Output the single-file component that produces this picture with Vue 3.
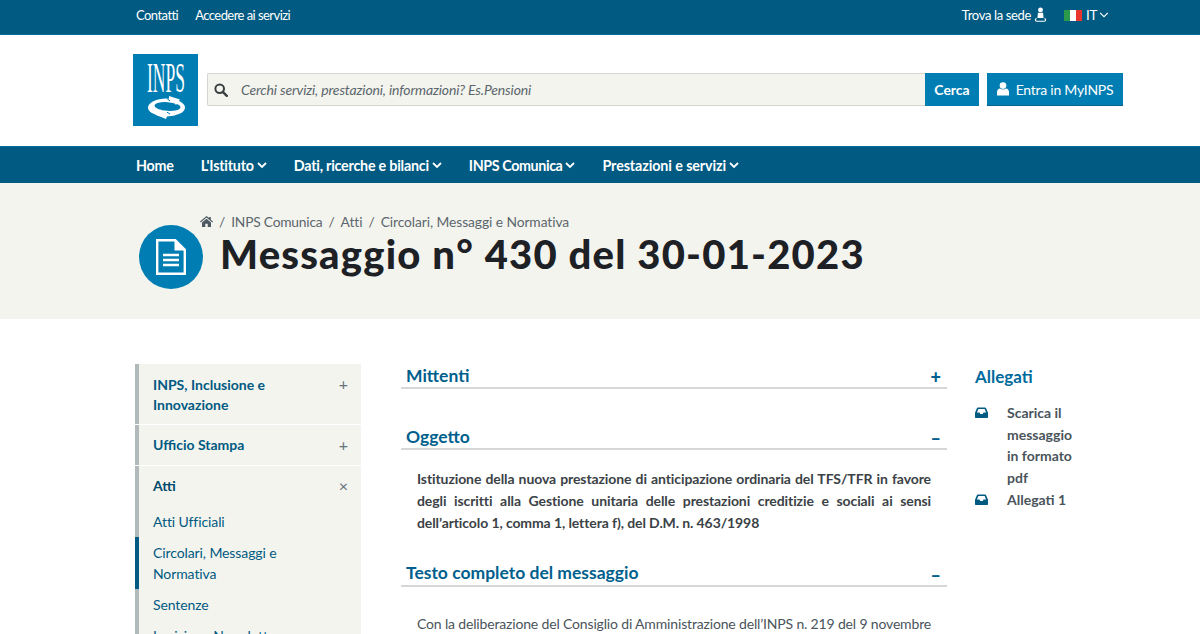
<script setup>
const menu = [
  { t: 'Home', c: false },
  { t: "L'Istituto", c: true },
  { t: 'Dati, ricerche e bilanci', c: true },
  { t: 'INPS Comunica', c: true },
  { t: 'Prestazioni e servizi', c: true }
]
</script>

<template>
  <div class="page">
    <div class="topbar">
      <div class="top-left"><span>Contatti</span><span>Accedere ai servizi</span></div>
      <div class="top-right">
        <span class="sede">Trova la sede
          <svg width="13" height="16" viewBox="0 0 14 17"><circle cx="7" cy="3" r="2.6" fill="#fff"/><path d="M4.2 6.2h5.6l.5 5.6H3.700z" fill="#fff"/><path d="M2.500 11.500C.5 12.300.2 15.600 3 15.800h8c2.800-.2 2.500-3.500.5-4.300l-.3 1.200c1.100.6 1 1.900-.3 2H3.100c-1.300-.1-1.400-1.400-.3-2z" fill="#fff"/></svg>
        </span>
        <span class="flag"><i class="g"></i><i class="w"></i><i class="r"></i></span>
        <span class="lang">IT
          <svg class="chev" width="10" height="6" viewBox="0 0 11 7"><path d="M1 1l4.500 4.500L10 1" fill="none" stroke="#fff" stroke-width="1.300"/></svg>
        </span>
      </div>
    </div>

    <header class="head">
      <svg class="logo" width="65" height="72" viewBox="0 0 65 72">
        <rect width="65" height="72" fill="#007db3"/>
        <text x="33" y="38" text-anchor="middle" textLength="38" lengthAdjust="spacingAndGlyphs" font-family="Liberation Serif" font-size="43" fill="#fff">INPS</text>
        <ellipse cx="33.500" cy="53.500" rx="18.500" ry="9" fill="#fff"/>
        <ellipse cx="34.500" cy="52.500" rx="13" ry="4.300" fill="#007db3" transform="rotate(4 34.500 52.500)"/>
        <path d="M36 42l11 3.500-4 5.500-2-2.500-7-1 2-2.500z" fill="#fff"/>
        <path d="M33 65l-10-4 4.500-5.500 2 2.500 6.500 1-1.500 2z" fill="#fff"/>
        <path d="M34 44.500l3 2.500M37 60l-3-1.800" stroke="#007db3" stroke-width="1"/>
      </svg>
      <div class="search">
        <svg width="14" height="14" viewBox="0 0 14 14"><circle cx="5.700" cy="5.700" r="4.300" fill="none" stroke="#3a3f42" stroke-width="2"/><path d="M8.800 8.800l4 4" stroke="#3a3f42" stroke-width="2.400" stroke-linecap="round"/></svg>
        <span>Cerchi servizi, prestazioni, informazioni? Es.Pensioni</span>
      </div>
      <div class="cerca">Cerca</div>
      <div class="entra">
        <svg width="12" height="14" viewBox="0 0 12 14"><circle cx="6" cy="3.600" r="3.300" fill="#fff"/><path d="M0 13.500V10c0-2 1.500-3.300 3-3.500 1.800 1.200 4.200 1.200 6 0 1.500.2 3 1.500 3 3.500v3.500z" fill="#fff"/></svg>
        <span>Entra in MyINPS</span>
      </div>
    </header>

    <nav class="nav">
      <span v-for="m in menu" :key="m.t" class="nav-item">{{ m.t }}
        <svg v-if="m.c" width="10" height="7" viewBox="0 0 10 7"><path d="M1 1l4 4 4-4" fill="none" stroke="#fff" stroke-width="1.800"/></svg>
      </span>
    </nav>

    <section class="hero">
      <div class="crumbs">
        <svg width="13" height="11" viewBox="0 0 13 11"><path d="M6.500 0L0 5.600l.7.8L6.500 1.500l5.800 4.900.7-.8-2.200-1.900V1H9.200v1.100zM2 6.600V11h3.300V7.700h2.400V11H11V6.600L6.500 2.800z" fill="#4d5a62"/></svg>
        <span>/</span><span class="tight">INPS Comunica</span><span>/</span><span>Atti</span><span>/</span><span>Circolari, Messaggi e Normativa</span>
      </div>
      <div class="title-row">
        <div class="circle">
          <svg width="30" height="36" viewBox="0 0 30 36"><path d="M1.200 1.200h18l9.600 9.600v24H1.200z" fill="none" stroke="#fff" stroke-width="2.400"/><path d="M18.500 1.500v10h10z" fill="#fff"/><path d="M7 16h16M7 21h16M7 26h16" stroke="#fff" stroke-width="2.400"/></svg>
        </div>
        <h1>Messaggio n° 430 del 30-01-2023</h1>
      </div>
    </section>

    <div class="content">
      <aside class="side">
        <div class="s-item">
          <div class="s-head"><b class="low">INPS, Inclusione e Innovazione</b><span class="sym">+</span></div>
        </div>
        <div class="s-item">
          <div class="s-head"><b>Ufficio Stampa</b><span class="sym">+</span></div>
        </div>
        <div class="s-item open">
          <div class="s-head"><b class="dark">Atti</b><span class="sym">×</span></div>
          <div class="s-sub">Atti Ufficiali</div>
          <div class="s-sub active">Circolari, Messaggi e Normativa</div>
          <div class="s-sub">Sentenze</div>
          <div class="s-sub">Iscrizione Newsletter</div>
        </div>
      </aside>

      <main class="main">
        <div class="acc first"><h2>Mittenti</h2><span class="pm">+</span></div>
        <div class="acc oggetto"><h2>Oggetto</h2><span class="pm">–</span></div>
        <p class="obj">Istituzione della nuova prestazione di anticipazione ordinaria del TFS/TFR in favore degli iscritti alla Gestione unitaria delle prestazioni creditizie e sociali ai sensi dell’articolo 1, comma 1, lettera f), del D.M. n. 463/1998</p>
        <div class="acc testo"><h2>Testo completo del messaggio</h2><span class="pm">–</span></div>
        <p class="body">Con la deliberazione del Consiglio di Amministrazione dell’INPS n. 219 del 9 novembre</p>
      </main>

      <aside class="att">
        <h3>Allegati</h3>
        <div class="a-row">
          <svg width="13" height="11" viewBox="0 0 13 11"><path d="M3 .5h7c.5 0 .8.2 1 .6l2 4.600V10c0 .6-.4 1-1 1H1c-.6 0-1-.4-1-1V5.700l2-4.600C2.200.7 2.500.5 3 .5zM3.400 2L1.900 5.500h2.600l.8 1.500h2.400l.8-1.500h2.600L9.600 2z" fill="#005a82" fill-rule="evenodd"/></svg>
          <span>Scarica il messaggio in formato pdf</span>
        </div>
        <div class="a-row">
          <svg width="13" height="11" viewBox="0 0 13 11"><path d="M3 .5h7c.5 0 .8.2 1 .6l2 4.600V10c0 .6-.4 1-1 1H1c-.6 0-1-.4-1-1V5.700l2-4.600C2.200.7 2.500.5 3 .5zM3.400 2L1.900 5.500h2.600l.8 1.500h2.400l.8-1.500h2.600L9.600 2z" fill="#005a82" fill-rule="evenodd"/></svg>
          <span>Allegati 1</span>
        </div>
      </aside>
    </div>
  </div>
</template>

<style scoped>
.page { width: 1200px; height: 634px; overflow: hidden; font-family: Lato, "Noto Sans", sans-serif; color: #333; background: #fff; }
.topbar { height: 35px; background: #005a82; border-bottom: 1px solid #0a6d99; box-sizing: border-box; display: flex; justify-content: space-between; padding: 0 91px 4px 136px; align-items: center; color: #fff; font-size: 13px; letter-spacing: -.55px; }
.top-left { display: flex; gap: 17px; }
.top-right { display: flex; align-items: center; }
.sede { display: flex; align-items: center; gap: 3px; letter-spacing: -.35px; }
.flag { display: flex; margin-left: 17px; height: 11px; }
.flag i { width: 6px; height: 11px; display: block; }
.flag .g { background: #2a9a4a; } .flag .w { background: #fff; } .flag .r { background: #e8362f; }
.lang { margin-left: 4px; display: flex; align-items: center; gap: 2px; font-size: 13.500px; letter-spacing: -.4px; }
.head { height: 111px; display: flex; align-items: flex-start; padding: 19px 0 0 133px; box-sizing: border-box; }
.search { margin: 19px 0 0 9px; width: 718px; height: 33px; box-sizing: border-box; background: #f4f4ee; border: 1px solid #d5d6d0; border-right: 0; border-radius: 2px 0 0 2px; display: flex; align-items: center; padding-left: 6px; gap: 13px; color: #5b666d; font-style: italic; font-size: 14px; letter-spacing: -.15px; }
.cerca { width: 54px; height: 33px; margin-top: 19px; background: #007db3; color: #fff; font-weight: 700; font-size: 14px; display: flex; align-items: center; justify-content: center; }
.entra { margin: 19px 0 0 8px; width: 136px; height: 33px; background: #007db3; color: #fff; display: flex; align-items: center; justify-content: center; gap: 7px; font-size: 14px; letter-spacing: -.25px; border-bottom: 1px solid #00638f; box-sizing: border-box; }
.nav { height: 37px; background: #005a82; border-top: 1px solid #0a6d99; box-sizing: border-box; display: flex; align-items: center; padding-left: 136px; gap: 27px; color: #fff; font-weight: 700; font-size: 14.300px; letter-spacing: -.22px; }
.nav-item { display: flex; align-items: center; gap: 3px; }
.nav-item:nth-child(4) { letter-spacing: -.4px; }
.nav-item:nth-child(5) { letter-spacing: -.1px; }
.hero { height: 136px; background: #f4f4ee; box-sizing: border-box; padding: 30px 0 0 139px; }
.crumbs { display: flex; align-items: center; gap: 6px; margin-left: 61px; color: #5b666d; font-size: 13.800px; height: 17px; letter-spacing: -.07px; }
.crumbs span { white-space: nowrap; }
.crumbs .tight { letter-spacing: -.22px; }
.title-row { display: flex; align-items: center; margin-top: -5px; gap: 17px; }
.circle { width: 64px; height: 64px; border-radius: 50%; background: #007db3; display: flex; align-items: center; justify-content: center; flex: none; }
h1 { margin: -6px 0 0; font-size: 40px; font-weight: 900; color: #1d2125; white-space: nowrap; line-height: 50px; letter-spacing: 1.2px; }
.content { display: flex; padding: 45px 0 0 135px; align-items: flex-start; }
.side { width: 226px; flex: none; }
.s-item { background: #f4f4ee; border-left: 4px solid #b1b9bb; margin-bottom: 1px; padding: 0 13px 0 14px; position: relative; }
.s-head { display: flex; justify-content: space-between; padding: 10px 0; line-height: 20px; font-size: 14px; color: #005a82; }
.s-head b { width: 150px; }
.s-head b.low { position: relative; top: 1px; }
.s-head b.dark { color: #004a6b; }
.sym { color: #65727a; font-size: 16px; line-height: 20px; }
.s-sub { font-size: 14px; line-height: 21px; color: #005a82; padding: 5px 0; width: 150px; letter-spacing: -.1px; }
.s-sub.active { position: relative; }
.s-sub.active::before { content: ""; position: absolute; left: -18px; top: 0; bottom: 0; width: 4px; background: #005a82; }
.main { width: 546px; margin-left: 40px; flex: none; }
.acc { display: flex; justify-content: space-between; align-items: center; border-bottom: 2px solid #d6d8d8; height: 25px; padding: 0 6px 0 5px; box-sizing: border-box; }
.acc h2 { margin: 0; font-size: 17.500px; font-weight: 700; color: #005f8c; line-height: 22px; }
.testo h2 { position: relative; top: -1px; }
.pm { font-size: 18px; font-weight: 900; color: #005f8c; line-height: 18px; position: relative; top: 1px; }
.first { margin-bottom: 36px; }
.obj { margin: 18px 16px 28px; font-size: 14px; line-height: 22px; font-weight: 700; color: #3b4246; text-align: justify; letter-spacing: -.1px; }
.body { margin: 26px 16px 0; font-size: 14px; line-height: 22px; color: #4a545b; white-space: nowrap; letter-spacing: -.16px; }
.att { margin-left: 28px; width: 110px; flex: none; }
.att h3 { margin: 0 0 12px; font-size: 17px; font-weight: 700; color: #006a9c; line-height: 26px; }
.a-row { display: flex; align-items: flex-start; font-size: 14px; line-height: 21.700px; font-weight: 700; color: #4a545b; }
.a-row svg { flex: none; margin: 5px 19px 0 0; }
.a-row span { width: 70px; }
</style>
